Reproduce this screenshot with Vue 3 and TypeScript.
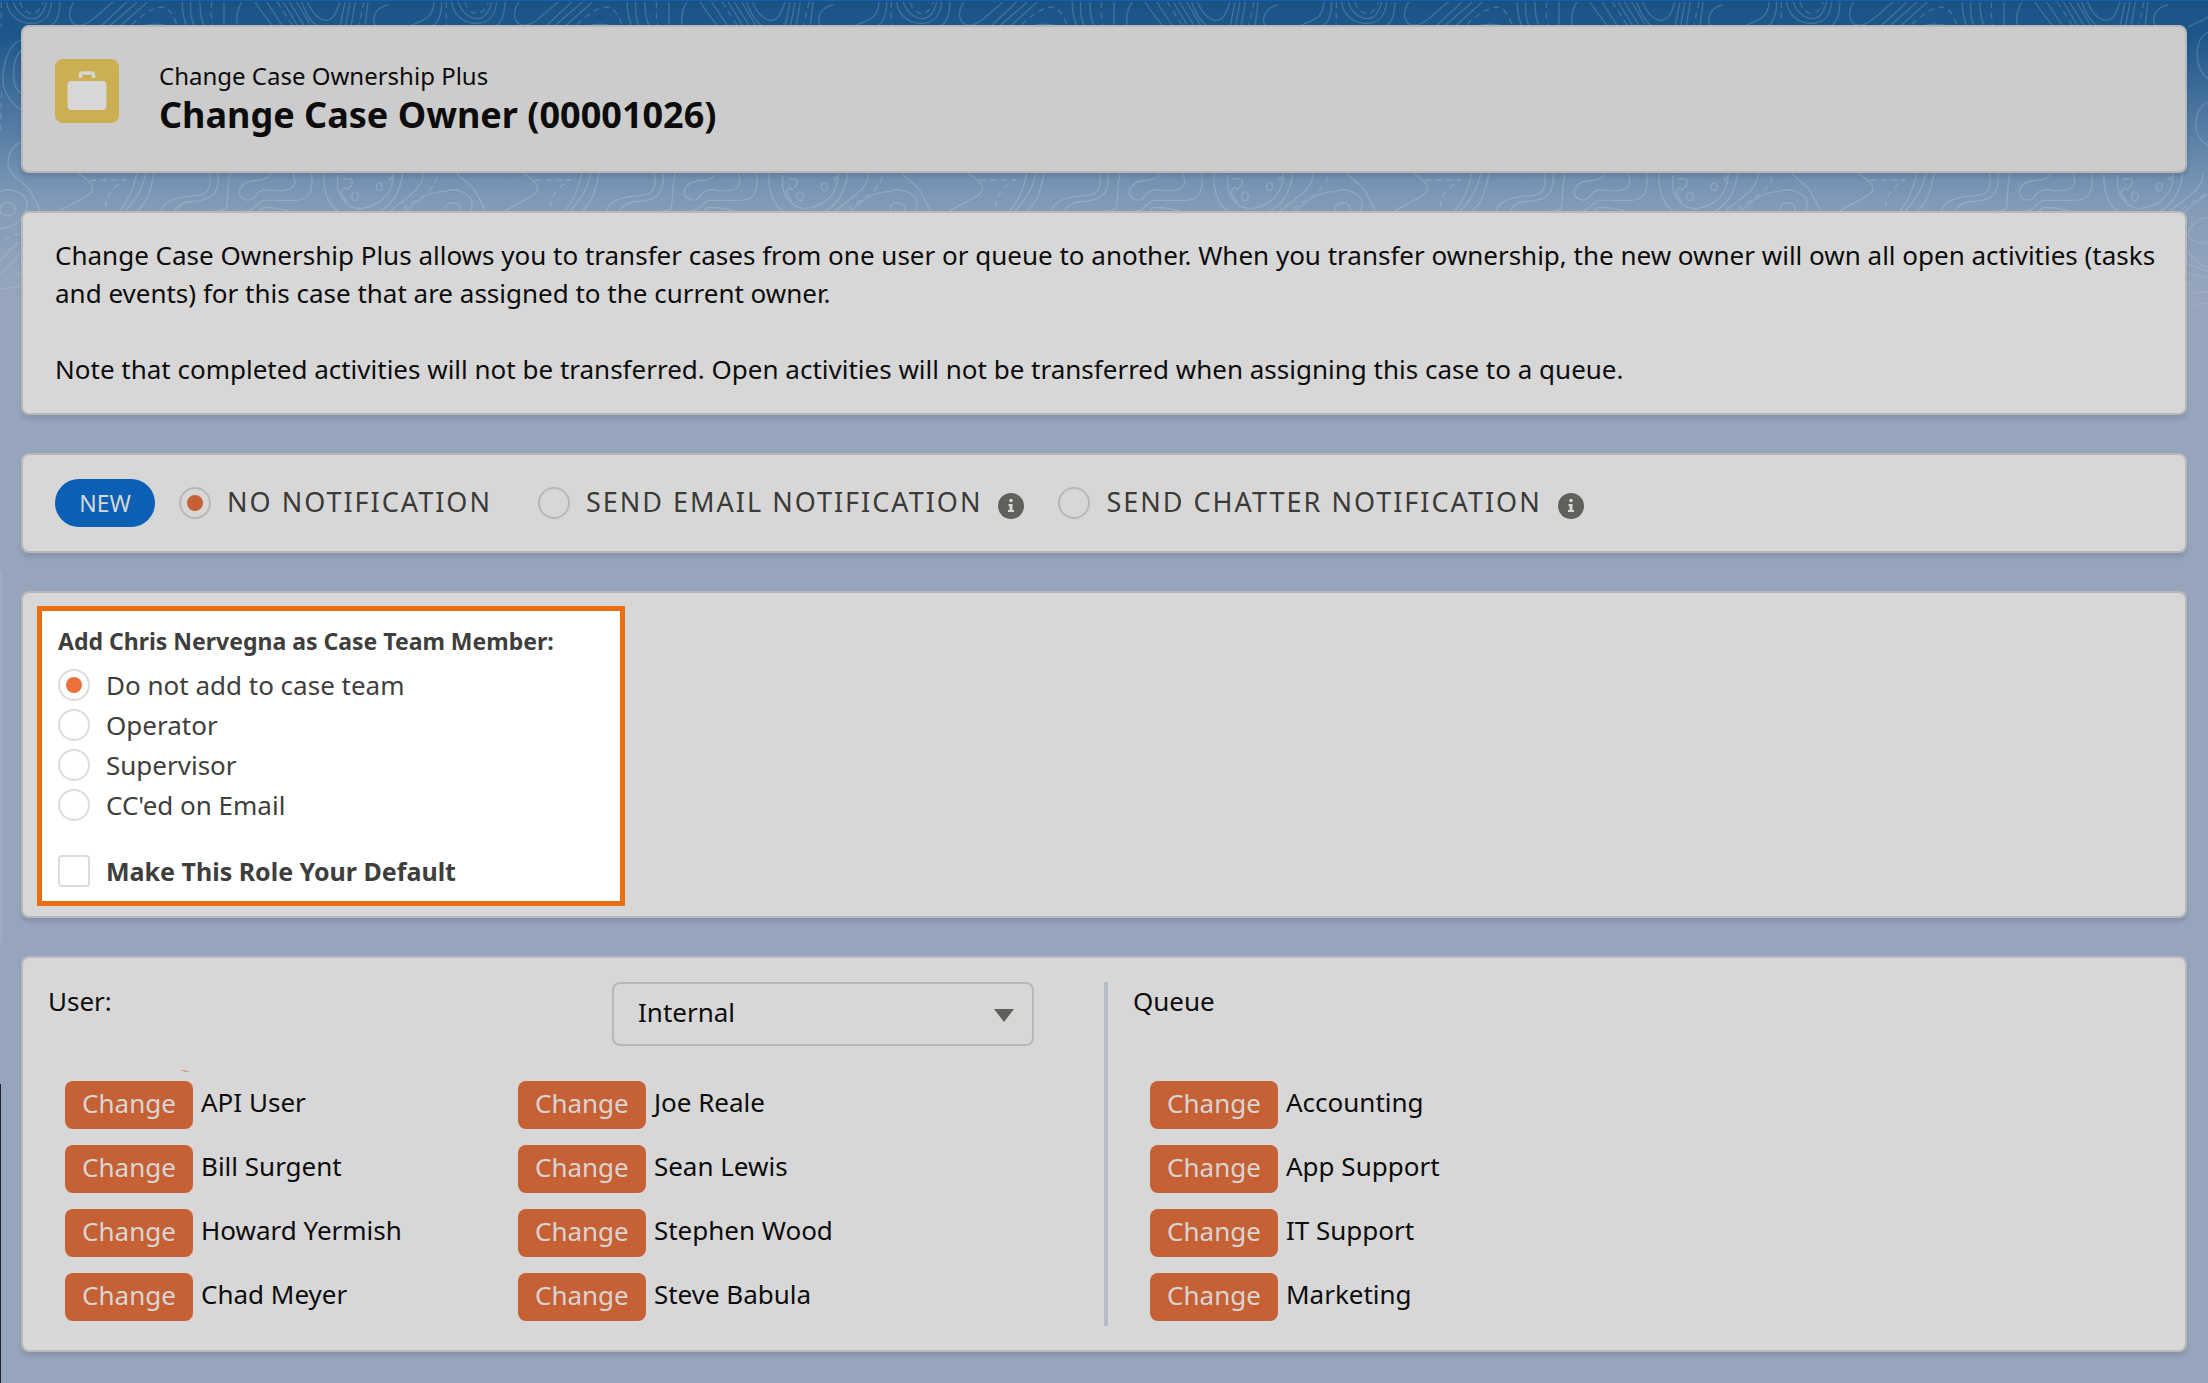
<script setup lang="ts">
import { ref } from 'vue'

interface NotificationOption {
  value: string
  label: string
  hasInfo: boolean
}

const notifications: NotificationOption[] = [
  { value: 'none', label: 'NO NOTIFICATION', hasInfo: false },
  { value: 'email', label: 'SEND EMAIL NOTIFICATION', hasInfo: true },
  { value: 'chatter', label: 'SEND CHATTER NOTIFICATION', hasInfo: true },
]
const notification = ref('none')

const roles: string[] = ['Do not add to case team', 'Operator', 'Supervisor', "CC'ed on Email"]
const role = ref(roles[0])
const makeDefault = ref(false)

const userType = ref('Internal')
const userColumns: string[][] = [
  ['API User', 'Bill Surgent', 'Howard Yermish', 'Chad Meyer'],
  ['Joe Reale', 'Sean Lewis', 'Stephen Wood', 'Steve Babula'],
]
const queues: string[] = ['Accounting', 'App Support', 'IT Support', 'Marketing']
</script>

<template>
  <div class="page">
    <svg class="topo" width="100%" height="420" aria-hidden="true">
      <defs>
        <linearGradient id="fade" x1="0" y1="0" x2="0" y2="1">
          <stop offset="0" stop-color="#fff" />
          <stop offset="0.5" stop-color="#fff" />
          <stop offset="0.9" stop-color="#000" />
        </linearGradient>
        <mask id="fade-mask"><rect width="100%" height="420" fill="url(#fade)" /></mask>
        <pattern id="contours" width="445" height="420" patternUnits="userSpaceOnUse" viewBox="0 0 1335 1260">
          <g fill="none" stroke="#fff" stroke-opacity="0.17" stroke-width="4">
            <path d="M20 0C25 40 55 64 97 64C135 64 150 40 155 0M40 0C50 32 75 50 97 50C118 50 132 30 140 0M180 0C178 45 170 60 150 75M222 0C200 30 205 70 240 70C270 68 300 30 340 0M380 0L300 75M412 0L325 75M442 0L358 75M420 75C450 64 480 64 510 75M547 0C545 35 555 55 560 75M572 0C570 35 575 60 585 75M600 0C600 35 605 60 615 75M672 0V75M726 0C708 25 708 50 712 75M765 0C790 40 810 60 820 75M800 0L850 75M850 0L895 75M868 0L915 75M890 0L935 75M905 0C920 45 940 65 955 75M922 0C940 40 960 55 980 55C1000 55 1010 30 1020 0M1035 0L1020 75M1050 0L1036 75M1066 0L1053 75M1104 0L1095 75M1165 8C1115 20 1115 60 1130 75M1302 0C1300 60 1250 55 1225 75M1325 0C1325 45 1310 70 1290 75" />
            <path stroke-dasharray="18 14" d="M60 0C75 46 115 46 130 0M395 68C430 35 460 15 490 15C510 18 520 45 535 75M635 0C632 35 635 60 640 75M832 0L880 75M1092 0L1075 75M4 0V75M5 270L0 400" />
            <path d="M65 112C20 130 5 200 10 250C20 290 40 310 65 325M65 145C35 165 30 255 65 275M65 420C35 430 20 460 25 495M1284 90C1240 110 1240 200 1284 230M1284 300C1240 320 1230 400 1284 430" />
            <g transform="translate(0 495)">
              <path d="M25 0C40 40 80 45 95 80C110 110 118 120 122 138M0 74C20 62 60 70 78 95C90 130 60 182 0 185M235 18C265 40 280 50 278 70C270 90 230 100 170 138M410 20C400 70 380 110 355 138M438 20C425 80 400 100 372 138M462 20C450 80 440 110 405 138M628 20C640 90 600 85 560 88C510 95 485 110 483 138M655 20C660 110 600 100 560 105C540 110 530 120 520 138M690 20C680 60 685 100 678 125C660 138 620 130 575 138M812 22C800 38 780 40 755 42C725 46 700 80 735 98C770 108 760 68 800 68C840 75 880 75 885 45L880 20M935 20C940 70 930 98 890 100H790C765 110 765 138 720 133L575 138M780 138C775 118 800 120 830 124C860 130 870 130 880 138M972 20C968 90 1000 138 1035 138M1015 24C1000 90 1050 125 1080 125C1150 118 1180 70 1180 20M1028 36C1050 35 1062 30 1055 55L1042 68L1035 62C1010 75 1035 90 1040 105M1165 30L1170 40L1178 26M1208 20C1200 80 1170 120 1130 138M1268 20C1275 70 1190 110 1165 138M1210 138C1250 105 1275 74 1335 74" />
              <ellipse cx="23" cy="127" rx="23" ry="20" />
              <ellipse cx="1065" cy="88" rx="10" ry="13" />
              <ellipse cx="1138" cy="60" rx="9" ry="11" />
              <path stroke-dasharray="18 14" d="M270 40L375 38C340 60 300 100 325 138M1312 30C1300 80 1240 100 1190 138M63 200L0 220M63 318L0 340M60 480C50 510 20 530 0 555M1222 348L1284 355" />
              <path d="M63 225C30 235 20 270 0 280M63 255C40 280 20 310 0 318M63 357L0 366M63 445C40 455 40 500 0 525M63 490C50 530 20 580 30 605L63 610M1284 152C1245 155 1225 185 1225 200C1225 225 1260 228 1284 228M1222 250C1240 280 1260 295 1284 300M1222 290L1284 314M1222 318L1284 332M1222 378L1284 375M1284 410C1240 405 1225 430 1222 450M1240 518C1270 515 1280 530 1275 560C1265 600 1240 610 1225 620" />
            </g>
          </g>
        </pattern>
      </defs>
      <rect width="100%" height="420" fill="url(#contours)" mask="url(#fade-mask)" />
    </svg>

    <main class="stack">
      <header class="card head">
        <svg class="case-icon" viewBox="0 0 64 64" width="64" height="64" aria-hidden="true">
          <rect width="64" height="64" rx="8" fill="#ccaf52" />
          <path d="M25.500 19v-3q0-2 2-2h9q2 0 2 2v3" fill="none" stroke="#d7d7d7" stroke-width="3.500" />
          <rect x="12.500" y="22" width="39" height="29" rx="4" fill="#d7d7d7" />
        </svg>
        <div>
          <p class="app-name">Change Case Ownership Plus</p>
          <h1 class="title">Change Case Owner (00001026)</h1>
        </div>
      </header>

      <section class="card intro">
        <p>Change Case Ownership Plus allows you to transfer cases from one user or queue to another. When you transfer ownership, the new owner will own all open activities (tasks and events) for this case that are assigned to the current owner.</p>
        <p>Note that completed activities will not be transferred. Open activities will not be transferred when assigning this case to a queue.</p>
      </section>

      <section class="card notify">
        <span class="badge">NEW</span>
        <div v-for="n in notifications" :key="n.value" class="notify-item">
          <label class="option caps">
            <input v-model="notification" type="radio" name="notification" :value="n.value" />
            <span>{{ n.label }}</span>
          </label>
          <svg v-if="n.hasInfo" class="info" viewBox="0 0 26 26" width="26" height="26" aria-hidden="true">
            <circle cx="13" cy="13" r="13" fill="#62605b" />
            <circle cx="13" cy="7.500" r="1.800" fill="#d7d7d7" />
            <path d="M10.500 11h4v6h1.500v2h-6v-2h1.500v-4h-1z" fill="#d7d7d7" />
          </svg>
        </div>
      </section>

      <section class="card team">
        <fieldset class="team-box">
          <legend>Add Chris Nervegna as Case Team Member:</legend>
          <div class="roles">
            <label v-for="r in roles" :key="r" class="option">
              <input v-model="role" type="radio" name="role" :value="r" />
              <span>{{ r }}</span>
            </label>
          </div>
          <label class="option strong">
            <input v-model="makeDefault" type="checkbox" name="default-role" />
            <span>Make This Role Your Default</span>
          </label>
        </fieldset>
      </section>

      <section class="card owners">
        <div class="users">
          <div class="owners-head">
            <label for="user-type">User:</label>
            <span class="select-wrap">
              <select id="user-type" v-model="userType">
                <option>Internal</option>
              </select>
              <svg class="caret" viewBox="0 0 20 13" width="20" height="13" aria-hidden="true">
                <path d="M0 0h20L10 13z" fill="#62605b" />
              </svg>
            </span>
          </div>
          <div class="lists two">
            <ul v-for="(column, i) in userColumns" :key="i">
              <li v-for="name in column" :key="name">
                <button type="button">Change</button><span>{{ name }}</span>
              </li>
            </ul>
            <svg class="swoosh" viewBox="0 0 10 3" width="10" height="3" aria-hidden="true">
              <path d="M0 0Q6 0 10 2Q5 2 0 0z" fill="#d07a56" />
            </svg>
          </div>
        </div>
        <div class="queues">
          <div class="owners-head"><h2>Queue</h2></div>
          <div class="lists">
            <ul>
              <li v-for="name in queues" :key="name">
                <button type="button">Change</button><span>{{ name }}</span>
              </li>
            </ul>
          </div>
        </div>
      </section>
    </main>
  </div>
</template>

<style>
body {
  margin: 0;
  background: #96a5bd;
}
</style>

<style scoped>
.page {
  position: relative;
  box-sizing: border-box;
  min-height: 100vh;
  padding: 25px 21px 31px;
  background:
    linear-gradient(#0a63b3, #0a63b3) 0 0 / 100% 1px no-repeat,
    linear-gradient(#9eacc4, #9eacc4) 0 570px / 2px 373px no-repeat,
    linear-gradient(#222, #222) 0 1084px / 1px 100% no-repeat,
    linear-gradient(#1b4f80 0, #1c5589 12px, #1e568a 36px, #7290b1 176px, #859cb8 210px, #96a5bd 290px);
  color: #0c0c0c;
  font-family: 'Noto Sans', 'Open Sans', sans-serif;
  font-size: 26px;
  line-height: 38px;
}
.topo {
  position: absolute;
  top: 2px;
  left: 0;
}
.stack {
  position: relative;
  display: flex;
  flex-direction: column;
  gap: 38px;
}
p, h1, h2, ul, fieldset {
  margin: 0;
  padding: 0;
}
.card {
  box-sizing: border-box;
  border: 2px solid #b8b8b8;
  border-radius: 8px;
  background: #d7d7d7;
  box-shadow: 0 4px 4px rgba(0, 0, 0, 0.1);
}
.head {
  display: flex;
  gap: 40px;
  padding: 32px 32px 35px;
  background: #ccc;
}
.app-name {
  font-size: 24px;
  line-height: 34px;
}
.title {
  font-size: 36px;
  font-weight: 700;
  line-height: 43px;
}
.intro {
  display: flex;
  flex-direction: column;
  gap: 38px;
  padding: 23px 24px 25px 32px;
}
.notify {
  display: flex;
  align-items: center;
  gap: 24px;
  padding: 24px 32px;
}
.badge {
  box-sizing: border-box;
  width: 100px;
  border-radius: 24px;
  background: #0b5fb4;
  color: #d7d7d7;
  font-size: 23px;
  line-height: 48px;
  text-align: center;
}
.notify-item {
  display: flex;
  align-items: center;
  gap: 16px;
  margin-right: 10px;
}
.notify-item:not(:has(.info)) {
  margin-right: 22px;
}
.option {
  display: flex;
  align-items: center;
  gap: 16px;
  color: #3a3a38;
}
.caps {
  font-size: 27px;
  letter-spacing: 2px;
}
.caps span {
  padding-bottom: 2px;
}
.option input {
  display: grid;
  flex: none;
  place-items: center;
  box-sizing: border-box;
  width: 32px;
  height: 32px;
  margin: 0;
  border: 2px solid #b7b7b7;
  appearance: none;
}
.option input[type='radio'] {
  border-radius: 50%;
}
.option input[type='checkbox'] {
  border-radius: 4px;
}
.option input[type='radio']:checked::before {
  width: 16px;
  height: 16px;
  border-radius: 50%;
  background: #c66135;
  content: '';
}
.info {
  margin-top: 6px;
}
.team {
  padding: 13px 14px 10px;
}
.team-box {
  box-sizing: border-box;
  width: 588px;
  padding: 16px 16px 14px;
  border: 5px solid #ea6e10;
  background: #fff;
}
.team-box legend {
  float: left;
  width: 100%;
  padding: 0;
  color: #3e3e3c;
  font-size: 23px;
  font-weight: 700;
  line-height: 28px;
}
.roles {
  display: flex;
  clear: both;
  flex-direction: column;
  gap: 8px;
  padding: 14px 0 34px;
}
.team-box .option {
  color: #3e3e3c;
  line-height: 32px;
}
.team-box .option input {
  border-color: #dcdcdc;
}
.team-box .option input[type='radio']:checked::before {
  background: #ec703b;
}
.strong {
  font-size: 25px;
  font-weight: 700;
}
.owners {
  display: grid;
  grid-template-columns: 1fr 1fr;
  padding: 24px 0;
}
.users {
  padding: 0 20px 5px 25px;
}
.queues {
  padding: 0 20px 5px 25px;
  border-left: 4px solid #b7bcc4;
}
.owners-head {
  display: flex;
  justify-content: space-between;
  height: 64px;
  padding-right: 50px;
}
.owners-head h2 {
  font-size: 26px;
  font-weight: 400;
}
.select-wrap {
  position: relative;
  width: 422px;
}
select {
  box-sizing: border-box;
  width: 100%;
  height: 64px;
  padding: 0 24px 4px;
  border: 2px solid #b7b7b7;
  border-radius: 8px;
  background: transparent;
  color: inherit;
  font: inherit;
  appearance: none;
}
.caret {
  position: absolute;
  top: 27px;
  right: 20px;
}
.lists {
  position: relative;
  display: grid;
  margin-top: 35px;
  padding-left: 17px;
}
.two {
  grid-template-columns: 4fr 5fr;
}
.swoosh {
  position: absolute;
  top: -11px;
  left: 132px;
}
ul {
  display: flex;
  flex-direction: column;
  gap: 16px;
  list-style: none;
}
li {
  display: flex;
  gap: 8px;
  height: 48px;
  line-height: 42px;
}
button {
  width: 128px;
  height: 48px;
  padding: 0 0 4px;
  border: 0;
  border-radius: 8px;
  background: #c66135;
  color: #d9d5d3;
  font: inherit;
}
</style>
